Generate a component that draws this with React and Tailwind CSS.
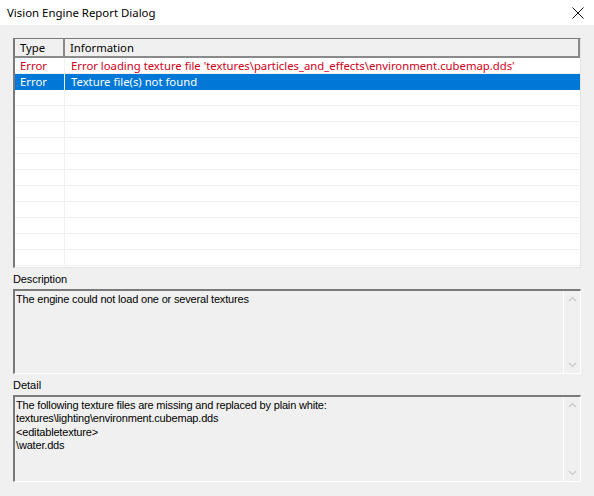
import React from "react";

const rows = [
  {
    type: "Error",
    info: "Error loading texture file 'textures\\particles_and_effects\\environment.cubemap.dds'",
    state: "error",
  },
  { type: "Error", info: "Texture file(s) not found", state: "selected" },
];

function ScrollBox({ lines, height }) {
  return (
    <div
      className="flex border-t-2 border-l-2 border-t-[#7a7a7a] border-l-[#7a7a7a] border-b border-r border-b-white border-r-white bg-[#f0f0f0]"
      style={{ height }}
    >
      <div className="flex-1 px-[1px] pt-[2px] text-[11px] leading-[13.4px] tracking-[-0.18px] text-black font-['Liberation_Sans',Arial,sans-serif]">
        {lines.map((l, i) => (
          <div key={i}>{l}</div>
        ))}
      </div>
      <div className="w-[17px] flex flex-col justify-between items-center py-[5px] border-l border-l-white">
        <svg width="9" height="6" viewBox="0 0 9 6">
          <path d="M1 5 L4.5 1.5 L8 5" fill="none" stroke="#c8c8c8" strokeWidth="1.2" />
        </svg>
        <svg width="9" height="6" viewBox="0 0 9 6">
          <path d="M1 1 L4.5 4.5 L8 1" fill="none" stroke="#c8c8c8" strokeWidth="1.2" />
        </svg>
      </div>
    </div>
  );
}

export default function App() {
  const empty = Array.from({ length: 11 });
  return (
    <div className="w-[594px] h-[496px] bg-[#f0f0f0] flex flex-col font-['Noto_Sans','Open_Sans',sans-serif]">
      {/* title bar */}
      <div className="h-[25px] bg-white flex items-center justify-between pl-[7px] pr-[8px]">
        <span className="text-[11.4px] text-black">Vision Engine Report Dialog</span>
        <svg width="12" height="12" viewBox="0 0 12 12" className="mr-[2px]">
          <path d="M0.5 0.5 L11.5 11.5 M11.5 0.5 L0.5 11.5" stroke="#111" strokeWidth="1" />
        </svg>
      </div>

      <div className="flex flex-col px-[13px] pt-[13px] pr-[13px]">
        {/* list */}
        <div className="h-[230px] bg-white border-l-2 border-t border-l-[#7a7a7a] border-t-[#7a7a7a] border-r border-b border-r-[#e3e3e3] border-b-[#e3e3e3] flex flex-col overflow-hidden text-[11.3px]">
          <div className="h-[19px] flex bg-[#f0f0f0] border-2 border-l-0 border-t-0 border-[#8a8a8a] text-black">
            <div className="w-[50px] pl-[5px] pt-[1px] border-r-2 border-[#8a8a8a] flex items-center">Type</div>
            <div className="flex-1 pl-[5px] pt-[1px] flex items-center">Information</div>
          </div>
          {rows.map((r, i) => (
            <div
              key={i}
              className={
                r.state === "selected"
                  ? "h-[16px] flex bg-[#0078d7] text-white"
                  : "h-[16px] flex bg-white text-[#d40019] border-b border-[#f0f0f0]"
              }
            >
              <div className="w-[50px] pl-[5px] pt-[1px] flex items-center border-r border-[#f0f0f0]">{r.type}</div>
              <div className="flex-1 pl-[6px] pt-[1px] flex items-center whitespace-nowrap">{r.info}</div>
            </div>
          ))}
          {empty.map((_, i) => (
            <div key={i} className="h-[16px] flex border-b border-[#f0f0f0] shrink-0">
              <div className="w-[50px] border-r border-[#f0f0f0]" />
              <div className="flex-1" />
            </div>
          ))}
        </div>

        <div className="h-[21px] flex items-end pb-[2px] text-[11px] tracking-[-0.1px] text-black font-['Liberation_Sans',Arial,sans-serif]">
          Description
        </div>
        <ScrollBox height={85} lines={["The engine could not load one or several textures"]} />

        <div className="h-[21px] flex items-end pb-[2px] text-[11px] text-black font-['Liberation_Sans',Arial,sans-serif]">
          Detail
        </div>
        <ScrollBox
          height={87}
          lines={[
            "The following texture files are missing and replaced by plain white:",
            "textures\\lighting\\environment.cubemap.dds",
            "<editabletexture>",
            "\\water.dds",
          ]}
        />
      </div>
    </div>
  );
}
